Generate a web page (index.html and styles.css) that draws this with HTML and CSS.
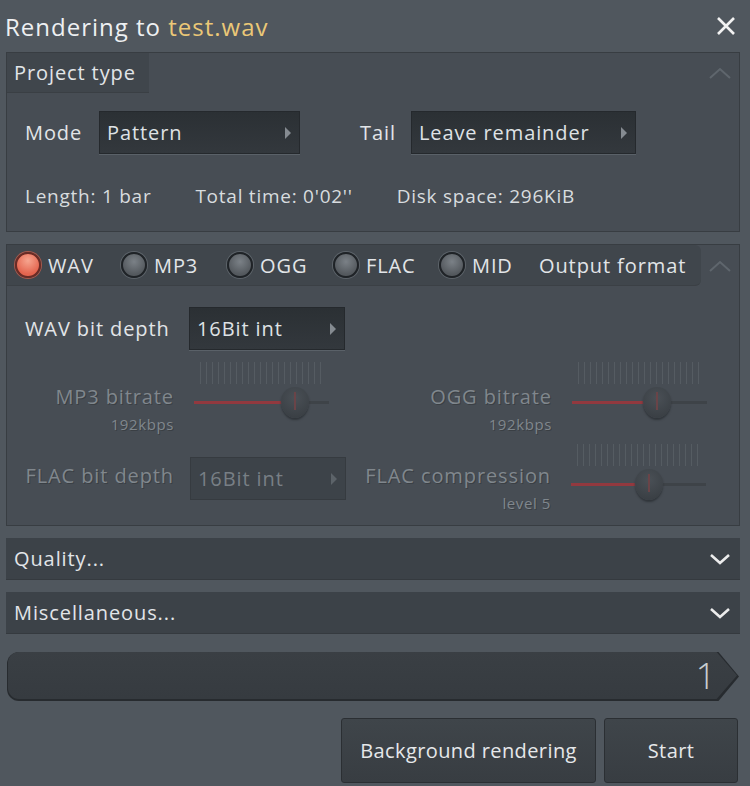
FILE: index.html
```html
<!DOCTYPE html>
<html lang="en">
<head>
    <meta charset="UTF-8">
    <title>Rendering to test.wav</title>
    <link rel="stylesheet" href="styles.css">
</head>
<body>
    <div class="window">
        <div class="titlebar">
            <span class="title">Rendering to <span class="file">test.wav</span></span>
            <svg class="close" width="20" height="20" viewBox="0 0 20 20"><path d="M2 2L18 18M18 2L2 18" stroke="#f2f2f2" stroke-width="2.6"/></svg>
        </div>

        <!-- project type -->
        <section class="panel project">
            <div class="panel-head">
                <div class="tab">Project type</div>
                <svg class="caret" width="22" height="12" viewBox="0 0 22 12"><path d="M1 11L11 2L21 11" fill="none" stroke="#5f666d" stroke-width="2"/></svg>
            </div>
            <div class="row mode-row">
                <span class="label">Mode</span>
                <div class="select mode-sel"><span>Pattern</span><i class="tri"></i></div>
                <span class="label tail">Tail</span>
                <div class="select tail-sel"><span>Leave remainder</span><i class="tri"></i></div>
            </div>
            <div class="row info">
                <span>Length: 1 bar</span>
                <span>Total time: 0'02''</span>
                <span>Disk space: 296KiB</span>
            </div>
        </section>

        <!-- output format -->
        <section class="panel output">
            <div class="panel-head">
                <div class="formats">
                    <label class="fmt"><i class="radio on"></i>WAV</label>
                    <label class="fmt"><i class="radio"></i>MP3</label>
                    <label class="fmt"><i class="radio"></i>OGG</label>
                    <label class="fmt"><i class="radio"></i>FLAC</label>
                    <label class="fmt last"><i class="radio"></i>MID</label>
                    <span class="fmt-title">Output format</span>
                </div>
                <svg class="caret" width="22" height="12" viewBox="0 0 22 12"><path d="M1 11L11 2L21 11" fill="none" stroke="#5f666d" stroke-width="2"/></svg>
            </div>
            <div class="row bit-row">
                <span class="label bit-label">WAV bit depth</span>
                <div class="select bit-sel"><span>16Bit int</span><i class="tri"></i></div>
            </div>
            <div class="row knob-row">
                <div class="dim-label"><span>MP3 bitrate</span><small>192kbps</small></div>
                <div class="slider"><div class="ticks"></div><div class="track"><b style="width: 75%"></b></div><div class="knob" style="left: 75%"></div></div>
                <div class="dim-label wide"><span>OGG bitrate</span><small>192kbps</small></div>
                <div class="slider"><div class="ticks"></div><div class="track"><b style="width: 63%"></b></div><div class="knob" style="left: 63%"></div></div>
            </div>
            <div class="row knob-row flac">
                <div class="dim-label"><span>FLAC bit depth</span></div>
                <div class="select bit-sel dim"><span>16Bit int</span><i class="tri"></i></div>
                <div class="dim-label wide2"><span>FLAC compression</span><small>level 5</small></div>
                <div class="slider"><div class="ticks"></div><div class="track"><b style="width: 58%"></b></div><div class="knob" style="left: 58%"></div></div>
            </div>
        </section>

        <div class="fold quality">
            <span>Quality...</span>
            <svg width="22" height="12" viewBox="0 0 22 12"><path d="M2 2L11 10L20 2" fill="none" stroke="#ececec" stroke-width="2.6"/></svg>
        </div>
        <div class="fold misc">
            <span>Miscellaneous...</span>
            <svg width="22" height="12" viewBox="0 0 22 12"><path d="M2 2L11 10L20 2" fill="none" stroke="#ececec" stroke-width="2.6"/></svg>
        </div>

        <div class="progress"><div class="progress-in"><span>1</span></div></div>

        <div class="actions">
            <button class="btn bg-btn">Background rendering</button>
            <button class="btn start-btn">Start</button>
        </div>
    </div>
</body>
</html>
```

FILE: styles.css
```css
body {
    margin: 0;
    background-color: #50575e;
    font-family: "Open Sans", "Noto Sans", sans-serif;
    color: #e2e5e8;
    letter-spacing: 0.9px;
}

.window {
    width: 750px;
    height: 786px;
    overflow: hidden;
}

.titlebar {
    height: 52px;
    display: flex;
    align-items: center;
    justify-content: space-between;
    padding: 0 14px 0 5px;
}

.title {
    font-size: 24px;
    letter-spacing: 1px;
    color: #eef0f2;
}

.file {
    color: #ebc877;
}

.panel {
    margin-left: 6px;
    width: 732px;
    background-color: #474d54;
    border: 1px solid #383d42;
}

.panel-head {
    display: flex;
    justify-content: space-between;
    align-items: center;
}

.caret {
    margin-right: 8px;
}

.tab {
    height: 40px;
    width: 142px;
    box-sizing: border-box;
    padding-left: 7px;
    display: flex;
    align-items: center;
    background-color: #40464c;
    border-bottom: 1px solid #3a3f44;
    font-size: 20px;
}

.project {
    height: 178px;
}

.row {
    display: flex;
    align-items: center;
}

.label {
    font-size: 20px;
}

.mode-row {
    margin-top: 18px;
    padding-left: 18px;
    gap: 15px;
}

.mode-sel {
    margin-left: 2px;
}

.tail {
    margin-left: 45px;
}

.select {
    height: 43px;
    box-sizing: border-box;
    background: linear-gradient(#2b3034, #33383d);
    border: 1px solid #25292d;
    box-shadow: 0 1px 0 #5a6168;
    display: flex;
    align-items: center;
    justify-content: space-between;
    padding: 0 8px 0 7px;
    font-size: 20px;
    color: #dfe2e5;
}

.mode-sel {
    width: 201px;
}

.tail-sel {
    width: 225px;
}

.tri {
    width: 0;
    height: 0;
    border-top: 6px solid transparent;
    border-bottom: 6px solid transparent;
    border-left: 6px solid #858b91;
}

.info {
    margin-top: 29px;
    padding-left: 18px;
    gap: 44px;
    font-size: 19px;
    letter-spacing: 0.75px;
    color: #d8dcdf;
}

.output {
    margin-top: 12px;
    height: 280px;
}

.formats {
    height: 41px;
    width: 694px;
    display: flex;
    align-items: center;
    background-color: #40464c;
    border-bottom: 1px solid #3b4045;
    border-radius: 0 6px 6px 0;
    padding-left: 8px;
    box-sizing: border-box;
    font-size: 20px;
}

.fmt {
    width: 106px;
    display: flex;
    align-items: center;
    gap: 7px;
}

.fmt.last {
    width: 100px;
}

.radio {
    width: 22px;
    height: 22px;
    border-radius: 50%;
    border: 2px solid #1f2327;
    background: radial-gradient(circle at 50% 35%, #7b8187, #54595e 70%);
    box-shadow: 0 0 0 1px #5c6369;
}

.radio.on {
    border-color: #6b2b25;
    background: radial-gradient(circle at 50% 30%, #f6a58f, #e4654f 70%);
    box-shadow: 0 0 0 1px #a7594c;
}

.bit-row {
    margin-top: 21px;
    padding-left: 18px;
    gap: 15px;
}

.bit-label {
    width: 149px;
    white-space: nowrap;
}

.bit-sel {
    width: 156px;
}

.knob-row {
    margin-top: 12px;
    height: 72px;
    align-items: flex-start;
}

.dim-label {
    width: 167px;
    display: flex;
    flex-direction: column;
    align-items: flex-end;
    padding-top: 22px;
    color: #80878d;
    text-shadow: 1px 1px 0 #3a3f44;
    font-size: 20px;
    line-height: 26px;
    white-space: nowrap;
}

.dim-label small {
    font-size: 15px;
    line-height: 28px;
    letter-spacing: 0.6px;
}

.dim-label.wide {
    width: 223px;
}

.dim-label.wide2 {
    width: 205px;
}

.slider {
    position: relative;
    width: 135px;
    height: 72px;
    margin-left: 20px;
}

.ticks {
    height: 22px;
    margin: 0 6px;
    background: repeating-linear-gradient(90deg, #5b6268 0 1px, transparent 1px 6px);
    opacity: 0.7;
}

.track {
    margin-top: 17px;
    height: 3px;
    background-color: #3e4348;
}

.track b {
    display: block;
    height: 3px;
    background-color: #92393f;
}

.knob {
    position: absolute;
    top: 25px;
    width: 28px;
    height: 31px;
    margin-left: -14px;
    border-radius: 50% 50% 50% 50% / 45% 45% 55% 55%;
    background: radial-gradient(circle at 50% 35%, #4a5056, #363b40);
    box-shadow: 0 2px 2px #30353a;
}

.knob::after {
    content: "";
    position: absolute;
    left: 13px;
    top: 5px;
    width: 2px;
    height: 18px;
    background-color: #6a4448;
}

.flac {
    margin-top: 22px;
}

.flac .dim-label {
    padding-top: 7px;
    width: 167px;
}

.flac .dim-label.wide2 {
    width: 205px;
}

.flac .select {
    margin-left: 16px;
    margin-top: 1px;
}

.dim {
    background: #3d4349;
    border-color: #363b40;
    box-shadow: none;
    color: #787f85;
}

.dim .tri {
    border-left-color: #5c6369;
}

.flac .slider {
    margin-top: -12px;
}

.fold {
    margin: 12px 0 0 6px;
    width: 734px;
    height: 42px;
    box-sizing: border-box;
    background-color: #3c4248;
    border-bottom: 1px solid #353a3f;
    display: flex;
    align-items: center;
    justify-content: space-between;
    padding: 0 9px 0 8px;
    font-size: 20px;
}

.misc {
    margin-top: 12px;
}

.progress {
    margin: 18px 0 0 7px;
    width: 732px;
    height: 49px;
    background-color: #272b2f;
    border-radius: 12px 0 0 12px;
    clip-path: polygon(0 0, 97.2% 0, 100% 50%, 97.2% 100%, 0 100%);
}

.progress-in {
    height: 47px;
    margin: 1px 0 0 1px;
    width: 729px;
    background: linear-gradient(#3a3f44, #363b40);
    border-radius: 11px 0 0 11px;
    clip-path: polygon(0 0, 97.2% 0, 100% 50%, 97.2% 100%, 0 100%);
    display: flex;
    align-items: center;
    justify-content: flex-end;
    padding-right: 20px;
    box-sizing: border-box;
    font-size: 36px;
    font-weight: 300;
    color: #c9cdd0;
}

.actions {
    margin-top: 17px;
    display: flex;
    justify-content: flex-end;
    gap: 8px;
    padding-right: 12px;
}

.btn {
    height: 65px;
    background: linear-gradient(#3f454a, #383d42);
    border: 1px solid #2b2f33;
    border-radius: 3px;
    font-family: "Open Sans", "Noto Sans", sans-serif;
    font-size: 20px;
    letter-spacing: 0.4px;
    color: #e6e8ea;
}

.bg-btn {
    width: 255px;
}

.start-btn {
    width: 134px;
}
```
